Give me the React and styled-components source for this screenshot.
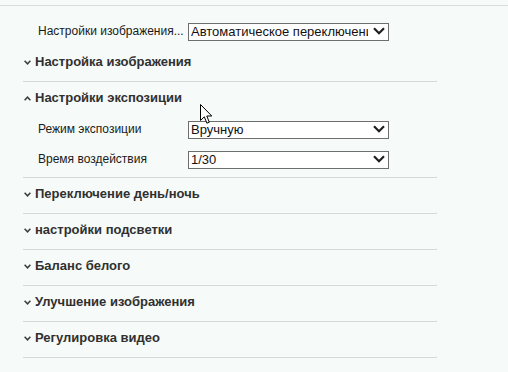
import React from 'react'
import styled, { createGlobalStyle } from 'styled-components'

const GlobalStyle = createGlobalStyle`
    html, body {
        margin:0;
        padding:0;
        background:#f6faf8;
        font-family:"Liberation Sans", Arial, sans-serif;
    }
`

const sections = [
    { title: 'Настройка изображения' },
    {
        title: 'Настройки экспозиции',
        open: true,
        rows: [
            { label: 'Режим экспозиции', value: 'Вручную' },
            { label: 'Время воздействия', value: '1/30' },
        ],
    },
    { title: 'Переключение день/ночь' },
    { title: 'настройки подсветки' },
    { title: 'Баланс белого' },
    { title: 'Улучшение изображения' },
    { title: 'Регулировка видео' },
]

function Chevron({ up }) {
    return (
        <ChevronIcon width="7" height="5" viewBox="0 0 7 5">
            <path
                d={up ? 'M0.6 4.2 L3.5 1.2 L6.4 4.2' : 'M0.6 0.8 L3.5 3.8 L6.4 0.8'}
                fill="none"
                stroke="#3c3c3c"
                strokeWidth="1.5"
            />
        </ChevronIcon>
    )
}

function Select({ value }) {
    return (
        <SelectBox>
            <select value={value} onChange={() => {}}>
                <option value={value}>{value}</option>
            </select>
            <SelectArrow width="12" height="8" viewBox="0 0 12 8">
                <path d="M1 1.2 L6 6.2 L11 1.2" fill="none" stroke="#1e1e1e" strokeWidth="2.2" />
            </SelectArrow>
        </SelectBox>
    )
}

function Cursor() {
    return (
        <CursorIcon width="13" height="21" viewBox="0 0 13 21">
            <path
                d="M0.5 0.5 L0.5 16.5 L4.3 12.8 L6.9 19.2 L9.3 18.2 L6.8 12 L11.8 12 Z"
                fill="#fff"
                stroke="#000"
                strokeWidth="1"
            />
        </CursorIcon>
    )
}

function App() {
    return (
        <Page>
            <GlobalStyle />
            <TopRow>
                <Label>Настройки изображения...</Label>
                <Select value="Автоматическое переключение" />
            </TopRow>
            <List>
                {sections.map((s) => (
                    <Section key={s.title}>
                        <Header>
                            <Chevron up={s.open} />
                            {s.title}
                        </Header>
                        {s.open && (
                            <Body>
                                {s.rows.map((r) => (
                                    <Row key={r.label}>
                                        <Label>{r.label}</Label>
                                        <Select value={r.value} />
                                    </Row>
                                ))}
                            </Body>
                        )}
                    </Section>
                ))}
            </List>
            <Cursor />
        </Page>
    )
}

export default App

const Page = styled.div`
    position:relative;
    width:508px;
    height:366px;
    margin-top:5px;
    border-top:1px solid #d9dcdb;
    overflow:hidden;
`
const TopRow = styled.div`
    display:flex;
    align-items:center;
    padding:16px 0 6px 38px;
`
const Label = styled.div`
    width:150px;
    font-size:12px;
    color:#1a1a1a;
    white-space:nowrap;
`
const SelectBox = styled.div`
    position:relative;
    width:201px;
    height:18px;
    select{
        appearance:none;
        -webkit-appearance:none;
        box-sizing:border-box;
        width:100%;
        height:18px;
        margin:0;
        padding:0 20px 0 2px;
        border:1px solid #6e6e6e;
        border-radius:0;
        background:#fff;
        font-family:"Liberation Sans", Arial, sans-serif;
        font-size:13px;
        line-height:16px;
        color:#111;
        outline:none;
    }
`
const SelectArrow = styled.svg`
    position:absolute;
    right:4px;
    top:5px;
    pointer-events:none;
`
const List = styled.div`
    margin-left:23px;
    width:414px;
`
const Section = styled.div`
    border-bottom:1px solid #d6d9d8;
`
const Header = styled.div`
    display:flex;
    align-items:center;
    height:35px;
    padding-bottom:4px;
    box-sizing:border-box;
    font-size:13px;
    font-weight:700;
    color:#303030;
`
const ChevronIcon = styled.svg`
    margin:1px 4px 0 1px;
    flex-shrink:0;
`
const Body = styled.div`
    display:flex;
    flex-direction:column;
    gap:12px;
    padding:3px 0 9px 15px;
`
const Row = styled.div`
    display:flex;
    align-items:center;
`
const CursorIcon = styled.svg`
    position:absolute;
    left:200px;
    top:98px;
`
